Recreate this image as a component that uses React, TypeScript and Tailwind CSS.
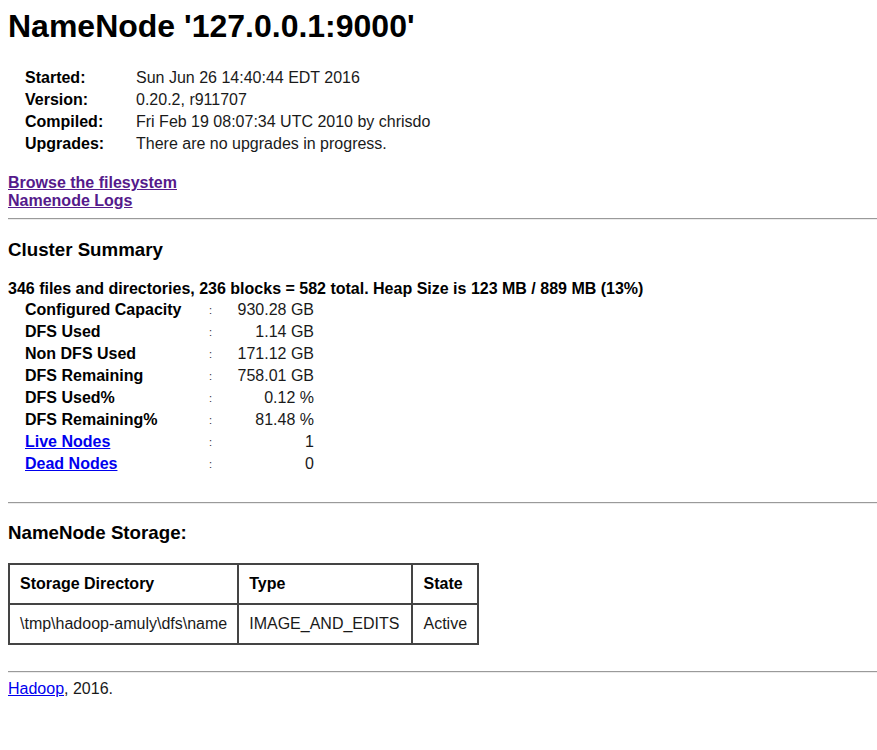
import React from "react";

const info: [string, string][] = [
  ["Started:", "Sun Jun 26 14:40:44 EDT 2016"],
  ["Version:", "0.20.2, r911707"],
  ["Compiled:", "Fri Feb 19 08:07:34 UTC 2010 by chrisdo"],
  ["Upgrades:", "There are no upgrades in progress."],
];

const summary: { label: string; value: string; link?: boolean }[] = [
  { label: "Configured Capacity", value: "930.28 GB" },
  { label: "DFS Used", value: "1.14 GB" },
  { label: "Non DFS Used", value: "171.12 GB" },
  { label: "DFS Remaining", value: "758.01 GB" },
  { label: "DFS Used%", value: "0.12 %" },
  { label: "DFS Remaining%", value: "81.48 %" },
  { label: "Live Nodes", value: "1", link: true },
  { label: "Dead Nodes", value: "0", link: true },
];

function Hr({ className }: { className: string }) {
  return <div className={"h-[2px] border-t border-t-[#9a9a9a] border-b border-b-[#ececec] " + className} />;
}

export default function App() {
  return (
    <div className="min-h-[750px] bg-white pl-[8px] pt-[8px] font-['Liberation_Sans',Arial,sans-serif] text-black">
      <h1 className="text-[32px] font-bold leading-[37px]">NameNode '127.0.0.1:9000'</h1>

      <div className="mt-[22px] flex flex-col pl-[17px]">
        {info.map(([k, v]) => (
          <div key={k} className="flex h-[22px] text-[16px] leading-[22px]">
            <div className="w-[111px] font-bold">{k}</div>
            <div className="text-[#1a1a1a]">{v}</div>
          </div>
        ))}
      </div>

      <div className="mt-[19px] flex flex-col items-start text-[16px] font-bold leading-[18px]">
        <a href="#" className="text-[#551a8b] underline">Browse the filesystem</a>
        <a href="#" className="text-[#551a8b] underline">Namenode Logs</a>
      </div>

      <Hr className="mt-[8px]" />

      <h3 className="mt-[19px] text-[18.72px] font-bold leading-[22px]">Cluster Summary</h3>

      <div className="mt-[19px] text-[16px] font-bold leading-[18px]">
        346 files and directories, 236 blocks = 582 total. Heap Size is 123 MB / 889 MB (13%)
      </div>

      <div className="mt-[0.5px] flex flex-col pl-[17px]">
        {summary.map((r) => (
          <div key={r.label} className="flex h-[22px] items-center text-[16px] leading-[22px]">
            <div className="w-[184px] font-bold">
              {r.link ? (
                <a href="#" className="text-[#0000ee] underline">{r.label}</a>
              ) : (
                r.label
              )}
            </div>
            <div className="w-[6px] text-[11px] leading-[22px] text-[#333]">:</div>
            <div className="w-[99px] text-right text-[#1a1a1a]">{r.value}</div>
          </div>
        ))}
      </div>

      <Hr className="mt-[27.5px]" />

      <h3 className="mt-[18px] text-[18.72px] font-bold leading-[22px]">NameNode Storage:</h3>

      <table className="mt-[18.5px] border-collapse border-2 border-[#444] text-[16px] leading-[18px]">
        <thead>
          <tr>
            <th className="border-2 border-[#444] px-[10px] py-[10px] text-left font-bold">Storage Directory</th>
            <th className="border-2 border-[#444] pl-[10px] pr-[12px] py-[10px] text-left font-bold">Type</th>
            <th className="border-2 border-[#444] px-[10px] py-[10px] text-left font-bold">State</th>
          </tr>
        </thead>
        <tbody>
          <tr className="text-[#1a1a1a]">
            <td className="border-2 border-[#444] px-[10px] py-[10px]">\tmp\hadoop-amuly\dfs\name</td>
            <td className="border-2 border-[#444] pl-[10px] pr-[12px] py-[10px]">IMAGE_AND_EDITS</td>
            <td className="border-2 border-[#444] px-[10px] py-[10px]">Active</td>
          </tr>
        </tbody>
      </table>

      <Hr className="mt-[26.5px]" />

      <div className="mt-[7px] text-[16px] leading-[18px] text-[#1a1a1a]">
        <a href="#" className="text-[#0000ee] underline">Hadoop</a>, 2016.
      </div>
    </div>
  );
}
